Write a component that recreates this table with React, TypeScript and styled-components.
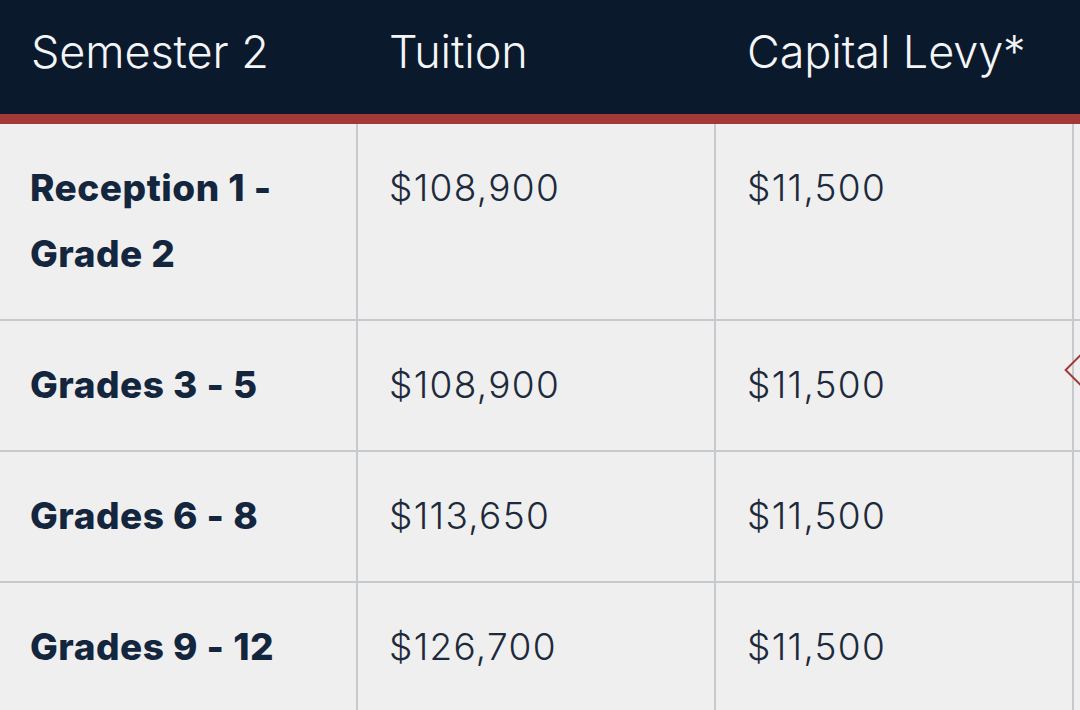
import React from "react";
import styled, { createGlobalStyle } from "styled-components";

const Global = createGlobalStyle`
  html, body { margin: 0; padding: 0; background: #efefef; }
  body { font-family: Inter, "Noto Sans", sans-serif; overflow: hidden; }
`;

const Frame = styled.div`
  position: relative;
  width: 1080px;
  height: 710px;
  overflow: hidden;
  background: #efefef;
`;

const Table = styled.div`
  display: grid;
  grid-template-columns: 358px 358px 358px 358px;
  width: 1432px;
`;

const HeadCell = styled.div`
  box-sizing: border-box;
  background: #0b192c;
  border-bottom: 10px solid #a23838;
  height: 124px;
  padding: 24px 0 0 31px;
  color: #f4f5f7;
  font-size: 45px;
  font-weight: 300;
  line-height: 56px;
  letter-spacing: -0.1px;
  white-space: nowrap;
`;

const Cell = styled.div<{ $first?: boolean }>`
  box-sizing: border-box;
  padding: 31px 16px 32px ${(p) => (p.$first ? "30px" : "31px")};
  border-right: 2px solid #c6c9ce;
  border-bottom: 2px solid #c6c9ce;
  line-height: 66px;
  font-size: 37px;
  color: #1d2a3b;
  white-space: nowrap;
`;

const Label = styled.span`
  font-weight: 800;
  color: #14263e;
  letter-spacing: 0.5px;
`;

const Value = styled.span`
  font-weight: 300;
  letter-spacing: 1.3px;
`;

const ScrollHint = styled.div`
  position: absolute;
  left: 1070px;
  top: 356px;
  width: 28px;
  height: 28px;
  border: 2px solid #a23838;
  transform: rotate(45deg);
  box-sizing: border-box;
`;

const rows = [
  { label: ["Reception 1 -", "Grade 2"], tuition: "$108,900", levy: "$11,500" },
  { label: ["Grades 3 - 5"], tuition: "$108,900", levy: "$11,500" },
  { label: ["Grades 6 - 8"], tuition: "$113,650", levy: "$11,500" },
  { label: ["Grades 9 - 12"], tuition: "$126,700", levy: "$11,500" },
];

export default function App() {
  return (
    <Frame>
      <Global />
      <Table>
        <HeadCell>Semester 2</HeadCell>
        <HeadCell>Tuition</HeadCell>
        <HeadCell>Capital Levy*</HeadCell>
        <HeadCell />
        {rows.map((r, i) => (
          <React.Fragment key={i}>
            <Cell $first>
              {r.label.map((l, j) => (
                <React.Fragment key={j}>
                  {j > 0 && <br />}
                  <Label>{l}</Label>
                </React.Fragment>
              ))}
            </Cell>
            <Cell>
              <Value>{r.tuition}</Value>
            </Cell>
            <Cell>
              <Value>{r.levy}</Value>
            </Cell>
            <Cell />
          </React.Fragment>
        ))}
      </Table>
      <ScrollHint />
    </Frame>
  );
}
